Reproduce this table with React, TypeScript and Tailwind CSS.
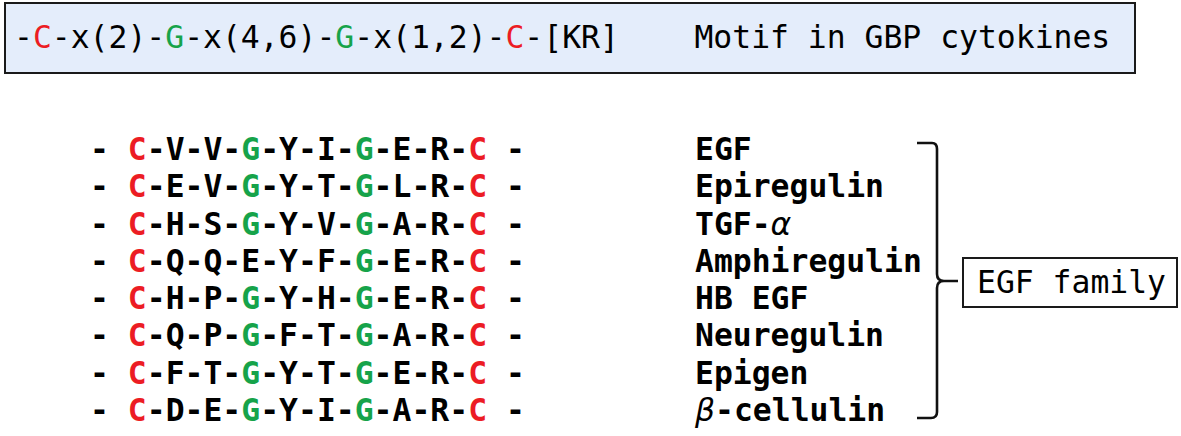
const RED = "text-[#ec1c24]";
const GREEN = "text-[#16a34a]";

type Seq = { res: string[]; name: React.ReactNode };

const rows: Seq[] = [
  { res: ["C", "V", "V", "G", "Y", "I", "G", "E", "R", "C"], name: "EGF" },
  { res: ["C", "E", "V", "G", "Y", "T", "G", "L", "R", "C"], name: "Epiregulin" },
  {
    res: ["C", "H", "S", "G", "Y", "V", "G", "A", "R", "C"],
    name: (
      <>
        TGF-<span className="font-['DejaVu_Sans',sans-serif] font-normal italic">α</span>
      </>
    ),
  },
  { res: ["C", "Q", "Q", "E", "Y", "F", "G", "E", "R", "C"], name: "Amphiregulin" },
  { res: ["C", "H", "P", "G", "Y", "H", "G", "E", "R", "C"], name: "HB EGF" },
  { res: ["C", "Q", "P", "G", "F", "T", "G", "A", "R", "C"], name: "Neuregulin" },
  { res: ["C", "F", "T", "G", "Y", "T", "G", "E", "R", "C"], name: "Epigen" },
  {
    res: ["C", "D", "E", "G", "Y", "I", "G", "A", "R", "C"],
    name: (
      <>
        <span className="font-['DejaVu_Sans',sans-serif] font-normal italic">β</span>-cellulin
      </>
    ),
  },
];

function colorFor(r: string) {
  if (r === "C") return RED;
  if (r === "G") return GREEN;
  return "";
}

function Residues({ res }: { res: string[] }) {
  return (
    <div className="whitespace-pre">
      {"- "}
      {res.map((r, i) => (
        <span key={i}>
          {i > 0 && "-"}
          <span className={colorFor(r)}>{r}</span>
        </span>
      ))}
      {" -"}
    </div>
  );
}

function Bracket() {
  return (
    <svg width="52" height="298" viewBox="0 0 52 298" className="shrink-0">
      <path
        d="M7 12 H22 Q27 12 27 18 V143 Q27 150 34 150 H48 M34 150 Q27 150 27 157 V281 Q27 287 21 287 H7"
        fill="none"
        stroke="#111"
        strokeWidth="2.6"
      />
    </svg>
  );
}

export default function App() {
  return (
    <div className="h-[436px] w-[1181px] overflow-hidden bg-white font-['DejaVu_Sans_Mono',monospace] text-black">
      <div className="ml-[4px] mt-[2px] flex h-[72px] w-[1132px] items-center border-2 border-[#1a1a1a] bg-[#e4edfb] pl-[8px] text-[31.4px] whitespace-pre">
        -<span className={RED}>C</span>-x(2)-<span className={GREEN}>G</span>-x(4,6)-
        <span className={GREEN}>G</span>-x(1,2)-<span className={RED}>C</span>-[KR]{"    "}Motif in GBP cytokines
      </div>

      <div className="mt-[57px] flex items-start">
        <div className="w-[695px] shrink-0 pl-[90px] text-[31.4px] font-bold leading-[37.3px]">
          {rows.map((r, i) => (
            <Residues key={i} res={r.res} />
          ))}
        </div>
        <div className="w-[215px] shrink-0 text-[31.4px] font-bold leading-[37.3px] whitespace-pre">
          {rows.map((r, i) => (
            <div key={i}>{r.name}</div>
          ))}
        </div>
        <Bracket />
        <div className="mt-[126px] flex h-[51px] w-[216px] shrink-0 items-center border-2 border-[#1a1a1a] pl-[13px] text-[31.4px] whitespace-pre">
          EGF family
        </div>
      </div>
    </div>
  );
}
